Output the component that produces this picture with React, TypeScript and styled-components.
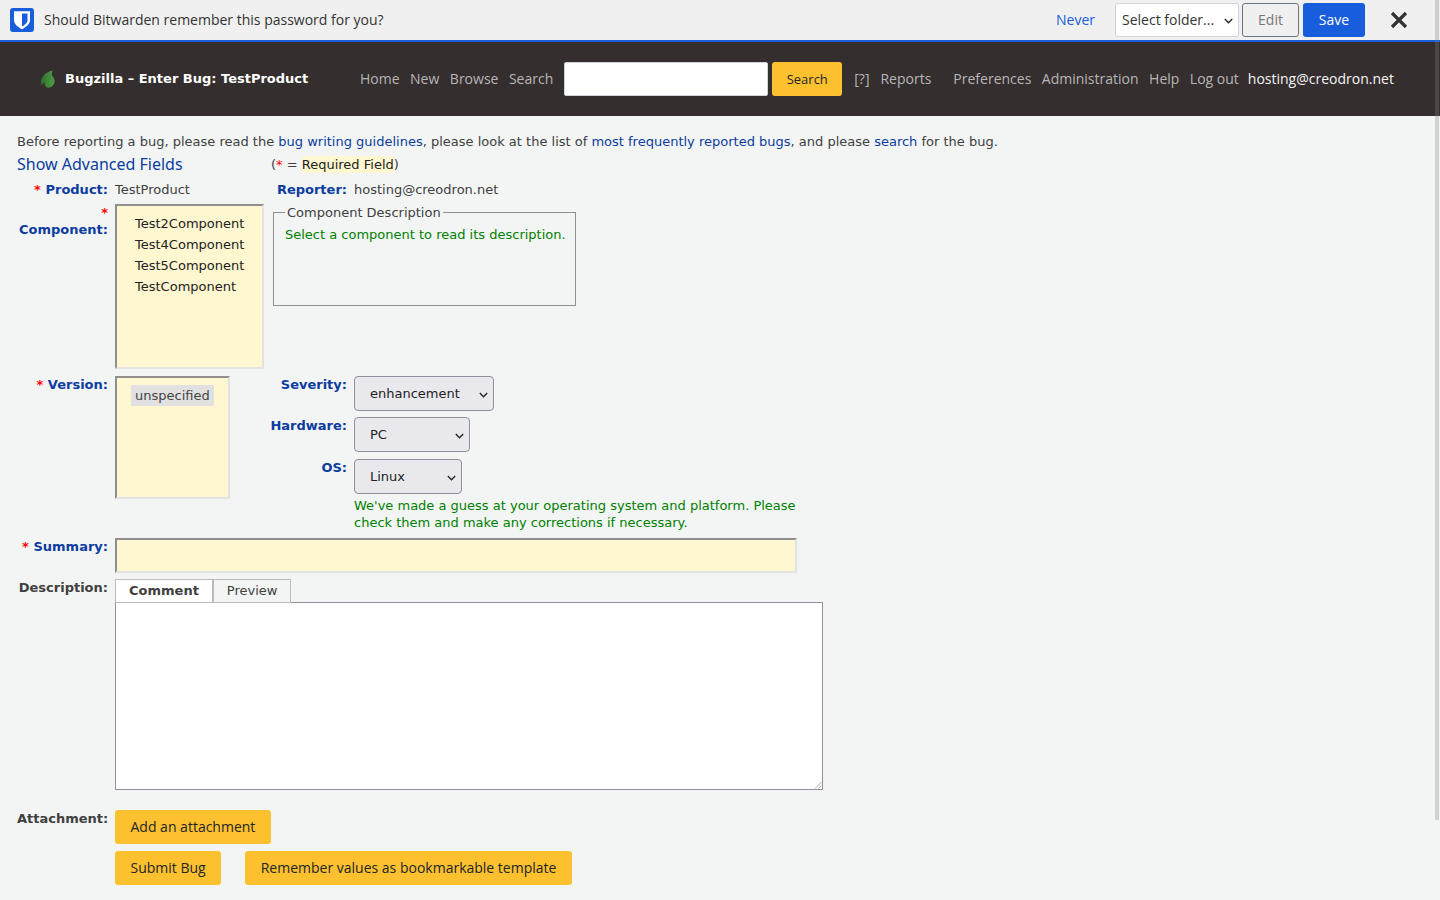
import styled, { createGlobalStyle } from 'styled-components';

const componentNames = ['Test2Component', 'Test4Component', 'Test5Component', 'TestComponent'];
const navLinks = ['Home', 'New', 'Browse', 'Search'];
const userLinks = ['Preferences', 'Administration', 'Help', 'Log out'];

const Chevron = () => (
  <ChevronIcon viewBox="0 0 8 5">
    <path d="M0.7 0.8L4 4 7.300.8" stroke="#222" strokeWidth="1.200" fill="none" />
  </ChevronIcon>
);

const FormSelect = ({ width, value }: { width: number; value: string }) => (
  <SelectWrap>
    <FieldSelect $width={width} defaultValue={value}>
      <option>{value}</option>
    </FieldSelect>
    <Chevron />
  </SelectWrap>
);

const App = () => {
  return (
    <Page>
      <GlobalStyle />
      <NotificationBar>
        <BitwardenLogo viewBox="0 0 24 24">
          <rect width="24" height="24" rx="3" fill="#175ddc" />
          <path d="M4 3.300h16v9c0 4-4.200 7-8 9-3.800-2-8-5-8-9z" fill="#fff" />
          <path d="M12 5.500h5.500v6.800c0 2.500-3 4.800-5.500 6.200z" fill="#175ddc" />
        </BitwardenLogo>
        <NotificationText>Should Bitwarden remember this password for you?</NotificationText>
        <NeverLink href="#">Never</NeverLink>
        <SelectWrap>
          <FolderSelect defaultValue="none">
            <option value="none">Select folder...</option>
          </FolderSelect>
          <Chevron />
        </SelectWrap>
        <EditButton>Edit</EditButton>
        <SaveButton>Save</SaveButton>
        <CloseIcon viewBox="0 0 18 18">
          <path d="M2 2l14 14M16 2L2 16" stroke="#333" strokeWidth="3.200" fill="none" />
        </CloseIcon>
      </NotificationBar>

      <Header>
        <Leaf viewBox="0 0 16 18">
          <defs>
            <linearGradient id="leaf" x1="0" y1="0" x2="1" y2="0">
              <stop offset="0" stopColor="#2f6f2f" />
              <stop offset="1" stopColor="#4f9f45" />
            </linearGradient>
          </defs>
          <path
            d="M13 0.500C7 1.500 1.500 6 1 11c-.2 2 .4 3.500 1.300 4.500.4-1.800 1.200-2.800 2.500-3-.5 1.700 0 3.800 2 5 3.500.8 7-1.500 7.700-5.500.4-2.500-1-4.500-2.200-6-.9-1.600-.5-3.800.7-6z"
            fill="url(#leaf)"
          />
        </Leaf>
        <Title>Bugzilla – Enter Bug: TestProduct</Title>
        <NavGroup>
          {navLinks.map((link) => (
            <NavLink key={link} href="#">{link}</NavLink>
          ))}
        </NavGroup>
        <QuickSearch />
        <SearchButton>Search</SearchButton>
        <HelpLink href="#">[?]</HelpLink>
        <ReportsLink href="#">Reports</ReportsLink>
        <UserGroup>
          {userLinks.map((link) => (
            <NavLink key={link} href="#">{link}</NavLink>
          ))}
        </UserGroup>
        <UserEmail>hosting@creodron.net</UserEmail>
      </Header>

      <Content>
        <Intro>
          Before reporting a bug, please read the <TextLink href="#">bug writing guidelines</TextLink>,
          please look at the list of <TextLink href="#">most frequently reported bugs</TextLink>, and
          please <TextLink href="#">search</TextLink> for the bug.
        </Intro>
        <AdvancedRow>
          <AdvancedLink href="#">Show Advanced Fields</AdvancedLink>
          <RequiredNote>
            (<NoteStar>*</NoteStar> = <RequiredMark>Required Field</RequiredMark>)
          </RequiredNote>
        </AdvancedRow>

        <ProductRow>
          <FieldLabel>
            <Star>*</Star> Product:
          </FieldLabel>
          <ProductValue>TestProduct</ProductValue>
          <ReporterLabel>Reporter:</ReporterLabel>
          <span>hosting@creodron.net</span>
        </ProductRow>

        <ComponentRow>
          <FieldLabel>
            <Star>*</Star>
            <br />
            Component:
          </FieldLabel>
          <ComponentList>
            {componentNames.map((name) => (
              <ListOption key={name}>{name}</ListOption>
            ))}
          </ComponentList>
          <DescriptionBox>
            <DescriptionLegend>Component Description</DescriptionLegend>
            <GreenText>Select a component to read its description.</GreenText>
          </DescriptionBox>
        </ComponentRow>

        <VersionRow>
          <FieldLabel>
            <Star>*</Star> Version:
          </FieldLabel>
          <VersionList>
            <SelectedOption>unspecified</SelectedOption>
          </VersionList>
          <PlatformFields>
            <PlatformRow>
              <PlatformLabel>Severity:</PlatformLabel>
              <FormSelect width={140} value="enhancement" />
            </PlatformRow>
            <PlatformRow>
              <PlatformLabel>Hardware:</PlatformLabel>
              <FormSelect width={116} value="PC" />
            </PlatformRow>
            <PlatformRow>
              <PlatformLabel>OS:</PlatformLabel>
              <FormSelect width={108} value="Linux" />
            </PlatformRow>
            <GuessNote>
              We've made a guess at your operating system and platform. Please check them and make any
              corrections if necessary.
            </GuessNote>
          </PlatformFields>
        </VersionRow>

        <SummaryRow>
          <FieldLabel>
            <Star>*</Star> Summary:
          </FieldLabel>
          <SummaryInput />
        </SummaryRow>

        <DescriptionRow>
          <PlainLabel>Description:</PlainLabel>
          <EditorColumn>
            <Tabs>
              <Tab $active>Comment</Tab>
              <Tab>Preview</Tab>
            </Tabs>
            <CommentArea />
            <ResizeGrip viewBox="0 0 8 8">
              <path d="M7.500 1L1 7.500M7.500 4.500L4.500 7.500" stroke="#aaa" fill="none" />
            </ResizeGrip>
          </EditorColumn>
        </DescriptionRow>

        <AttachmentRow>
          <PlainLabel>Attachment:</PlainLabel>
          <ActionButton>Add an attachment</ActionButton>
        </AttachmentRow>
        <SubmitRow>
          <ActionButton>Submit Bug</ActionButton>
          <ActionButton>Remember values as bookmarkable template</ActionButton>
        </SubmitRow>
      </Content>
      <ScrollThumb />
    </Page>
  );
};

export default App;

const GlobalStyle = createGlobalStyle`
  html, body {
    margin: 0;
    height: 100%;
    overflow: hidden;
    background: #f3f5f4;
  }
  * {
    box-sizing: border-box;
  }
`;

const Page = styled.div`
  position: relative;
  height: 900px;
  overflow: hidden;
  font-family: 'DejaVu Sans', sans-serif;
  font-size: 13px;
  color: #404040;
`;

const NotificationBar = styled.div`
  display: flex;
  align-items: center;
  height: 42px;
  padding: 0 32px 0 10px;
  background: #f0f0f0;
  border-bottom: 2px solid #175ddc;
  font-family: 'Open Sans', sans-serif;
  font-size: 14px;
  color: #333;
`;

const BitwardenLogo = styled.svg`
  width: 24px;
  height: 24px;
  flex: none;
`;

const NotificationText = styled.span`
  flex: 1;
  margin-left: 10px;
  padding-bottom: 2px;
`;

const NeverLink = styled.a`
  margin-right: 20px;
  padding-bottom: 2px;
  color: #175ddc;
  text-decoration: none;
`;

const SelectWrap = styled.div`
  position: relative;
  display: flex;
`;

const ChevronIcon = styled.svg`
  position: absolute;
  top: 50%;
  right: 6px;
  width: 9px;
  height: 6px;
  margin-top: -2px;
  pointer-events: none;
`;

const FolderSelect = styled.select`
  appearance: none;
  width: 124px;
  height: 34px;
  margin-right: 3px;
  padding: 0 6px 2px;
  background: #fff;
  border: 1px solid #ced4da;
  border-radius: 3px;
  font: inherit;
  color: #333;

  & + svg {
    right: 9px;
  }
`;

const EditButton = styled.button`
  width: 57px;
  height: 34px;
  padding: 0 0 2px;
  background: #f0f0f0;
  border: 1px solid #6c757d;
  border-radius: 3px;
  font: inherit;
  color: #777;
`;

const SaveButton = styled.button`
  width: 62px;
  height: 34px;
  margin-left: 4px;
  padding: 0 0 2px;
  background: #175ddc;
  border: 0;
  border-radius: 3px;
  font: inherit;
  color: #fff;
`;

const CloseIcon = styled.svg`
  width: 18px;
  height: 18px;
  margin-left: 25px;
`;

const Header = styled.header`
  display: flex;
  align-items: center;
  height: 74px;
  padding-left: 40px;
  background: #352e2e;
  font-family: 'Open Sans', sans-serif;
  font-size: 14px;
`;

const Leaf = styled.svg`
  width: 16px;
  height: 18px;
  flex: none;
`;

const Title = styled.span`
  width: 295px;
  margin-left: 9px;
  padding-bottom: 2px;
  font-family: 'DejaVu Sans', sans-serif;
  font-size: 13px;
  font-weight: 700;
  color: #fff;
`;

const NavGroup = styled.nav`
  display: flex;
  gap: 10.5px;
  padding-bottom: 2px;
`;

const NavLink = styled.a`
  color: #b6b6b6;
  text-decoration: none;
`;

const HelpLink = styled(NavLink)`
  margin-left: 12px;
  padding-bottom: 2px;
`;

const ReportsLink = styled(NavLink)`
  margin-left: 11px;
  padding-bottom: 2px;
`;

const QuickSearch = styled.input`
  width: 204px;
  height: 34px;
  margin-left: 11px;
  background: #fff;
  border: 1px solid #ced4da;
  border-radius: 2px;
`;

const SearchButton = styled.button`
  width: 70px;
  height: 34px;
  margin-left: 4px;
  background: #fdc02f;
  border: 0;
  border-radius: 3px;
  font-family: 'Open Sans', sans-serif;
  font-size: 13px;
  color: #212529;
`;

const UserGroup = styled.div`
  display: flex;
  gap: 10.5px;
  margin-left: 22px;
  padding-bottom: 2px;
`;

const UserEmail = styled.span`
  margin-left: 9px;
  padding-bottom: 2px;
  color: #f4f4f4;
`;

const Content = styled.main`
  padding: 17px 0 0 17px;
`;

const Intro = styled.div`
  line-height: 17px;
`;

const TextLink = styled.a`
  color: #0b3c9f;
  text-decoration: none;
`;

const AdvancedRow = styled.div`
  display: flex;
  align-items: center;
  height: 17px;
  margin-top: 6px;
`;

const AdvancedLink = styled.a`
  width: 254px;
  padding-bottom: 2px;
  font-family: 'Noto Sans', sans-serif;
  font-size: 16px;
  color: #0b3c9f;
  text-decoration: none;
`;

const RequiredNote = styled.span``;

const Star = styled.span`
  color: #f00;
  font-weight: 700;
`;

const NoteStar = styled.span`
  color: #f00;
`;

const RequiredMark = styled.span`
  padding: 1px 0;
  background: #fff7d0;
  color: #222;
`;

const FieldLabel = styled.label`
  width: 91px;
  flex: none;
  line-height: 17px;
  text-align: right;
  font-weight: 700;
  color: #0b3c9f;
`;

const PlainLabel = styled(FieldLabel)`
  color: #404040;
`;

const ProductRow = styled.div`
  display: flex;
  align-items: baseline;
  height: 17px;
  margin-top: 8px;
`;

const ProductValue = styled.span`
  width: 161px;
  margin-left: 7px;
`;

const ReporterLabel = styled.label`
  width: 71px;
  margin-right: 7px;
  text-align: right;
  font-weight: 700;
  color: #0b3c9f;
`;

const ComponentRow = styled.div`
  display: flex;
  align-items: flex-start;
  margin-top: 6px;
`;

const InsetBox = styled.div`
  background: #fff7d0;
  border: 2px solid;
  border-color: #8f8f8f #e3e3e3 #e3e3e3 #8f8f8f;
`;

const ComponentList = styled(InsetBox)`
  width: 149px;
  height: 165px;
  margin-left: 7px;
  padding: 7px 18px;
  color: #222;
`;

const ListOption = styled.div`
  height: 21px;
  line-height: 21px;
  white-space: nowrap;
`;

const DescriptionBox = styled.fieldset`
  position: relative;
  width: 303px;
  height: 94px;
  margin: 8px 0 0 9px;
  padding: 13px 0 0 11px;
  border: 1px solid #8f8f8f;
  line-height: 17px;
`;

const DescriptionLegend = styled.span`
  position: absolute;
  top: -9px;
  left: 11px;
  padding: 0 2px;
  background: #f3f5f4;
`;

const GreenText = styled.span`
  color: #008000;
`;

const VersionRow = styled.div`
  display: flex;
  align-items: flex-start;
  margin-top: 7px;
`;

const VersionList = styled(InsetBox)`
  width: 115px;
  height: 123px;
  margin-left: 7px;
  padding: 7px 14px;
  color: #444;
`;

const SelectedOption = styled.div`
  display: inline-block;
  height: 21px;
  padding: 0 4px;
  line-height: 21px;
  background: #e1e1e1;
`;

const PlatformFields = styled.div`
  width: 600px;
`;

const PlatformRow = styled.div`
  display: flex;
  margin-bottom: 6px;

  &:nth-child(2) {
    margin-bottom: 7px;
  }

  &:nth-child(3) {
    margin-bottom: 3px;
  }
`;

const PlatformLabel = styled.label`
  width: 124px;
  padding-right: 7px;
  flex: none;
  line-height: 17px;
  text-align: right;
  font-weight: 700;
  color: #0b3c9f;
`;

const FieldSelect = styled.select<{ $width: number }>`
  appearance: none;
  width: ${(p) => p.$width}px;
  height: 35px;
  padding: 0 15px;
  background: #e9e9ed;
  border: 1px solid #8f8f9d;
  border-radius: 4px;
  font: inherit;
  color: #222;
`;

const GuessNote = styled.div`
  width: 450px;
  margin-left: 124px;
  line-height: 17px;
  color: #008000;
`;

const SummaryRow = styled.div`
  display: flex;
  margin-top: 7px;
`;

const SummaryInput = styled.input`
  width: 682px;
  height: 35px;
  margin-left: 7px;
  background: #fff7d0;
  border: 2px solid;
  border-color: #8f8f8f #e3e3e3 #e3e3e3 #8f8f8f;
`;

const DescriptionRow = styled.div`
  display: flex;
  margin-top: 6px;
`;

const EditorColumn = styled.div`
  position: relative;
  margin-left: 7px;
`;

const Tabs = styled.div`
  display: flex;
`;

const Tab = styled.div<{ $active?: boolean }>`
  height: 24px;
  margin-bottom: -1px;
  padding: 0 13px;
  line-height: 22px;
  background: ${(p) => (p.$active ? '#fff' : '#f3f5f4')};
  border: 1px solid #bbb;
  font-weight: ${(p) => (p.$active ? 700 : 400)};
`;

const CommentArea = styled.textarea`
  display: block;
  width: 708px;
  height: 188px;
  margin: 0;
  background: #fff;
  border: 1px solid #8f8f9d;
  border-radius: 0;
  resize: none;
`;

const ResizeGrip = styled.svg`
  position: absolute;
  right: 1px;
  bottom: 1px;
  width: 8px;
  height: 8px;
`;

const AttachmentRow = styled.div`
  display: flex;
  gap: 7px;
  margin-top: 20px;
`;

const ActionButton = styled.button`
  height: 34px;
  padding: 0 15.5px 2px;
  background: #fdc02f;
  border: 0;
  border-radius: 3px;
  font-family: 'Open Sans', sans-serif;
  font-size: 14px;
  color: #212529;
`;

const SubmitRow = styled.div`
  display: flex;
  gap: 24px;
  margin: 7px 0 0 98px;
`;

const ScrollThumb = styled.div`
  position: absolute;
  top: 0;
  right: 1px;
  width: 4px;
  height: 820px;
  background: rgba(128, 128, 128, 0.3);
`;
